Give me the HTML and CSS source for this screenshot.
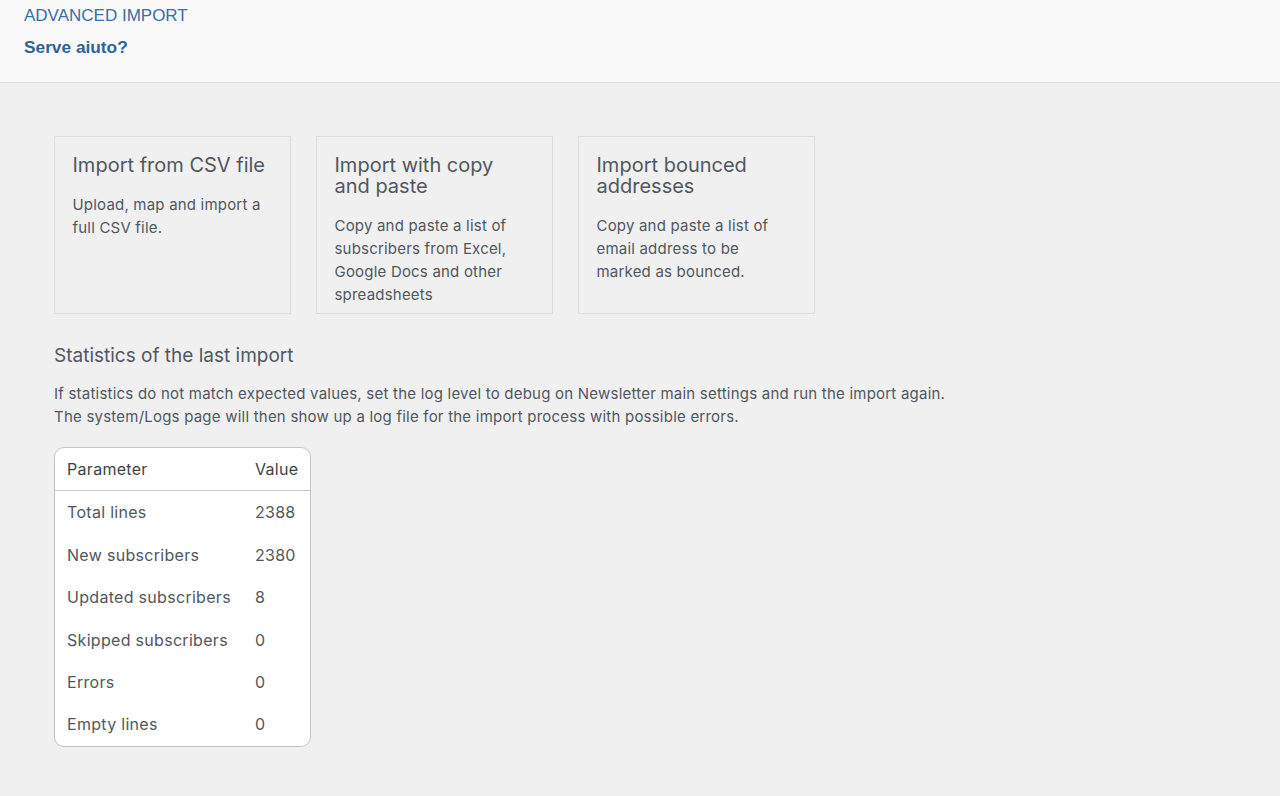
FILE: index.html
```html
<!DOCTYPE html>
<html lang="en">
<head>
<meta charset="utf-8">
<title>Advanced import</title>
<link rel="stylesheet" href="styles.css">
</head>
<body>
<header class="page-header">
  <h1 class="page-title">ADVANCED IMPORT</h1>
  <a class="help-link" href="#">Serve aiuto?</a>
</header>
<main class="content">
  <section class="cards">
    <div class="card">
      <h3 class="card-title">Import from CSV file</h3>
      <p class="card-text">Upload, map and import a full CSV file.</p>
    </div>
    <div class="card">
      <h3 class="card-title">Import with copy and paste</h3>
      <p class="card-text">Copy and paste a list of subscribers from Excel, Google Docs and other spreadsheets</p>
    </div>
    <div class="card">
      <h3 class="card-title">Import bounced addresses</h3>
      <p class="card-text">Copy and paste a list of email address to be marked as bounced.</p>
    </div>
  </section>
  <h3 class="stats-title">Statistics of the last import</h3>
  <p class="stats-text">If statistics do not match expected values, set the log level to debug on Newsletter main settings and run the import again.<br>The system/Logs page will then show up a log file for the import process with possible errors.</p>
  <div class="table-wrap">
    <table class="stats-table">
      <thead>
        <tr><th>Parameter</th><th>Value</th></tr>
      </thead>
      <tbody>
        <tr><td>Total lines</td><td>2388</td></tr>
        <tr><td>New subscribers</td><td>2380</td></tr>
        <tr><td>Updated subscribers</td><td>8</td></tr>
        <tr><td>Skipped subscribers</td><td>0</td></tr>
        <tr><td>Errors</td><td>0</td></tr>
        <tr><td>Empty lines</td><td>0</td></tr>
      </tbody>
    </table>
  </div>
</main>
</body>
</html>
```

FILE: styles.css
```css
html, body {
  margin: 0;
  padding: 0;
}
body {
  background: #f0f0f1;
  font-family: Inter, "Noto Sans", sans-serif;
  color: #50575e;
}
.page-header {
  background: #f9f9f9;
  border-bottom: 1px solid #dcdcde;
  padding: 5px 24px 0;
  height: 77px;
}
.page-title {
  margin: 0;
  font-family: "Liberation Sans", Arial, sans-serif;
  font-weight: 400;
  font-size: 17px;
  line-height: 22px;
  color: #3a6ea5;
}
.help-link {
  display: block;
  margin-top: 9px;
  font-family: "Liberation Sans", Arial, sans-serif;
  font-weight: 700;
  font-size: 17.3px;
  line-height: 22px;
  color: #2e6399;
  text-decoration: none;
}
.content {
  padding: 53px 54px 40px;
}
.cards {
  display: flex;
  gap: 25px;
}
.card {
  width: 237px;
  height: 178px;
  box-sizing: border-box;
  border: 1px solid #dcdcde;
  padding: 18px 18px 8px 17.5px;
}
.card-title {
  margin: 0;
  font-weight: 400;
  font-size: 20px;
  line-height: 21px;
  color: #50575e;
}
.card-text {
  margin: 17px 0 0;
  font-size: 15px;
  line-height: 23px;
  letter-spacing: 0.2px;
  color: #50575e;
}
.stats-title {
  margin: 29px 0 0;
  font-weight: 400;
  font-size: 19px;
  line-height: 25px;
  color: #50575e;
}
.stats-text {
  margin: 14px 0 0;
  font-size: 15px;
  line-height: 23px;
  letter-spacing: 0.22px;
  color: #50575e;
}
.table-wrap {
  display: inline-block;
  margin-top: 19px;
  background: #fff;
  border: 1px solid #c3c4c7;
  border-radius: 10px;
  overflow: hidden;
}
.stats-table {
  border-collapse: collapse;
  font-size: 16px;
  line-height: 22.4px;
  letter-spacing: 0.3px;
}
.stats-table th {
  text-align: left;
  font-weight: 400;
  color: #3c434a;
  padding: 10px 12px;
  border-bottom: 1px solid #c3c4c7;
}
.stats-table td {
  padding: 10px 12px;
  color: #50575e;
  white-space: nowrap;
}
```
